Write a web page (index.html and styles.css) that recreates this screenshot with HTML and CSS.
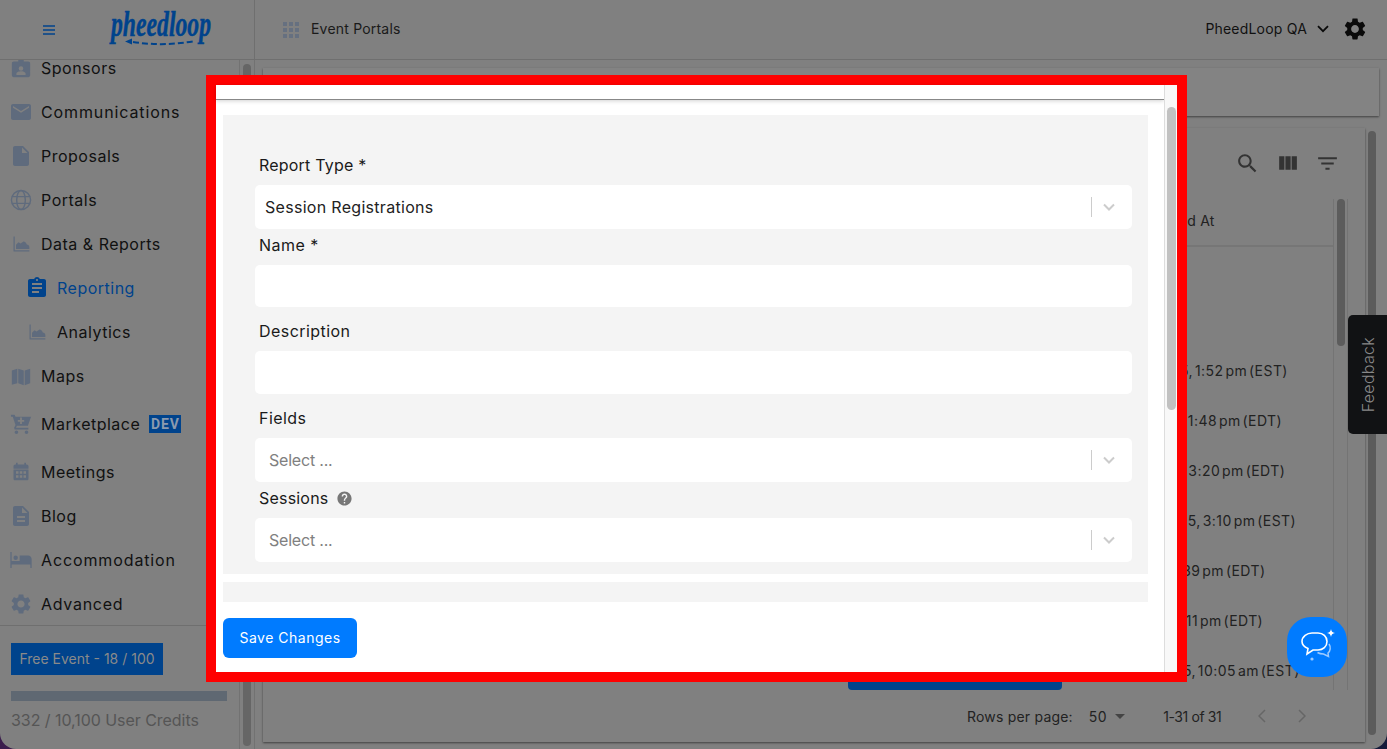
FILE: index.html
```html
<!DOCTYPE html>
<html lang="en">
<head>
<meta charset="utf-8">
<title>Event Portals</title>
<link rel="stylesheet" href="styles.css">
</head>
<body>
<div class="app">
  <header class="topbar">
    <div class="brand">
      <svg class="burger" viewBox="0 0 12 10"><path d="M0 1h12M0 5h12M0 9h12"/></svg>
      <svg class="logo" viewBox="0 0 100 36">
        <text x="0" y="24" textLength="100" lengthAdjust="spacingAndGlyphs">pheedloop</text>
        <path class="logo-dash" d="M22 30C42 33 62 33 84 29"/>
        <path class="logo-head" d="M14 29.500l7-3v6z"/>
      </svg>
    </div>
    <div class="crumb">
      <svg class="grid-ico" viewBox="0 0 16 16"><path d="M0 0h4v4H0zM6 0h4v4H6zM12 0h4v4h-4zM0 6h4v4H0zM6 6h4v4H6zM12 6h4v4h-4zM0 12h4v4H0zM6 12h4v4H6zM12 12h4v4h-4z"/></svg>
      <span class="bar-text">Event Portals</span>
    </div>
    <div class="account">
      <span class="bar-text">PheedLoop QA</span>
      <svg class="acc-chev" viewBox="0 0 12 8"><path d="M1 1.200l5 5 5-5"/></svg>
      <svg class="acc-gear" viewBox="0 0 24 24"><path d="M19.140 12.940c.04-.3.06-.61.06-.94 0-.32-.02-.64-.07-.94l2.030-1.580c.18-.14.23-.41.12-.61l-1.920-3.320c-.12-.22-.37-.29-.59-.22l-2.390.96c-.5-.38-1.030-.7-1.620-.94l-.36-2.540c-.04-.24-.24-.41-.48-.41h-3.840c-.24 0-.43.17-.47.41l-.36 2.540c-.59.24-1.130.57-1.620.94l-2.390-.96c-.22-.08-.47 0-.59.22L2.740 8.870c-.12.21-.08.47.12.61l2.030 1.580c-.05.3-.09.63-.09.94s.02.64.07.94l-2.030 1.580c-.18.14-.23.41-.12.61l1.920 3.320c.12.22.37.29.59.22l2.390-.96c.5.38 1.030.7 1.620.94l.36 2.540c.05.24.24.41.48.41h3.840c.24 0 .44-.17.47-.41l.36-2.540c.59-.24 1.130-.56 1.620-.94l2.390.96c.22.08.47 0 .59-.22l1.920-3.320c.12-.22.07-.47-.12-.61l-2.010-1.580zM12 15.600c-1.980 0-3.600-1.620-3.600-3.600s1.620-3.600 3.600-3.600 3.600 1.620 3.600 3.600-1.620 3.600-3.600 3.600z"/></svg>
    </div>
  </header>

  <div class="workspace">
    <aside class="sidebar">
      <div class="side-main">
        <nav class="nav">
          <ul class="nav-list">
            <li class="nav-item"><svg class="nav-ico ico-22" viewBox="0 0 24 24"><path fill-rule="evenodd" d="M4 5h5V3h2V1h2v2h2v2h5c1.100 0 2 .9 2 2v13c0 1.100-.9 2-2 2H4c-1.100 0-2-.9-2-2V7c0-1.100.9-2 2-2zm8 5a2.500 2.500 0 100 5 2.500 2.500 0 000-5zm-5 9.500h10V18c0-1.700-3.300-2.500-5-2.500S7 16.300 7 18z"/></svg>Sponsors</li>
            <li class="nav-item nav-wide"><svg class="nav-ico ico-mail" viewBox="0 0 20 16"><path fill-rule="evenodd" d="M2 0h16c1.100 0 2 .9 2 2v12c0 1.100-.9 2-2 2H2c-1.100 0-2-.9-2-2V2C0 .9.9 0 2 0zm16 2l-8 5-8-5v1.800l8 5 8-5z"/></svg>Communications</li>
            <li class="nav-item"><svg class="nav-ico ico-24" viewBox="0 0 24 24"><path d="M6 2c-1.100 0-1.990.9-1.990 2L4 20c0 1.100.89 2 1.990 2H18c1.100 0 2-.9 2-2V8l-6-6H6zm7 7V3.500L18.500 9H13z"/></svg>Proposals</li>
            <li class="nav-item"><svg class="nav-ico ico-23 nav-ico-line" viewBox="0 0 24 24"><circle cx="12" cy="12" r="10"/><ellipse cx="12" cy="12" rx="4.500" ry="10"/><path d="M2.500 8.500h19M2.500 15.500h19"/></svg>Portals</li>
            <li class="nav-item"><svg class="nav-ico" viewBox="0 0 24 24"><path d="M3 3h1.500v16.500H22V21H3zM6 18v-5l3-3 2.500 1.500L15 9c2 0 3.500 2 4 3.500 1.500 0 3 1.500 3 3V18z"/></svg>Data &amp; Reports</li>
            <li class="nav-item nav-sub nav-active"><svg class="nav-ico ico-24" viewBox="0 0 24 24"><path d="M19 3h-4.180C14.400 1.840 13.300 1 12 1c-1.300 0-2.400.84-2.820 2H5c-1.100 0-2 .9-2 2v14c0 1.100.9 2 2 2h14c1.100 0 2-.9 2-2V5c0-1.100-.9-2-2-2zm-7 0c.55 0 1 .45 1 1s-.45 1-1 1-1-.45-1-1 .45-1 1-1zm2 14H7v-2h7v2zm3-4H7v-2h10v2zm0-4H7V7h10v2z"/></svg>Reporting</li>
            <li class="nav-item nav-sub"><svg class="nav-ico" viewBox="0 0 24 24"><path d="M3 3h1.500v16.500H22V21H3zM6 18v-5l3-3 2.500 1.500L15 9c2 0 3.500 2 4 3.500 1.500 0 3 1.500 3 3V18z"/></svg>Analytics</li>
            <li class="nav-item"><svg class="nav-ico ico-22" viewBox="0 0 24 24"><path d="M2 6l6-2v16l-6 1.500zM9 4l6 2v16l-6-2zM16 6l6-2v16l-6 2z"/></svg>Maps</li>
            <li class="nav-item nav-tall"><svg class="nav-ico ico-22" viewBox="0 0 24 24"><path fill-rule="evenodd" d="M1 2h4l1 2h17l-3.500 10H7.500l-1 2H20v2H5l-.5-2 1.500-3L3 4H1zm10 3v2.500H8.500v2H11V12h2V9.500h2.500v-2H13V5zM7 19a2 2 0 110 4 2 2 0 010-4zm11 0a2 2 0 110 4 2 2 0 010-4z"/></svg>Marketplace<span class="dev">DEV</span></li>
            <li class="nav-item nav-tall"><svg class="nav-ico" viewBox="0 0 24 24"><path fill-rule="evenodd" d="M6 1h2v2h8V1h2v2h1c1.100 0 2 .9 2 2v15c0 1.100-.9 2-2 2H5c-1.100 0-2-.9-2-2V5c0-1.100.9-2 2-2h1zM3 8h18v1H3zM6 11v3h3v-3zm4.500 0v3h3v-3zM15 11v3h3v-3zM6 16v3h3v-3zm4.500 0v3h3v-3zM15 16v3h3v-3z"/></svg>Meetings</li>
            <li class="nav-item"><svg class="nav-ico ico-24" viewBox="0 0 24 24"><path d="M14 2H6c-1.100 0-1.990.9-1.990 2L4 20c0 1.100.89 2 1.990 2H18c1.100 0 2-.9 2-2V8l-6-6zm2 16H8v-2h8v2zm0-4H8v-2h8v2zm-3-5V3.500L18.500 9H13z"/></svg>Blog</li>
            <li class="nav-item nav-wide"><svg class="nav-ico ico-bed" viewBox="0 0 24 18"><path fill-rule="evenodd" d="M0 0h1.500v10h9V4H20c2.200 0 4 1.800 4 4v10h-1.500v-4h-21v4H0zM6 4a2.500 2.500 0 110 5 2.500 2.500 0 010-5z"/></svg>Accommodation</li>
            <li class="nav-item nav-mid"><svg class="nav-ico ico-24" viewBox="0 0 24 24"><path d="M19.140 12.940c.04-.3.06-.61.06-.94 0-.32-.02-.64-.07-.94l2.030-1.580c.18-.14.23-.41.12-.61l-1.920-3.320c-.12-.22-.37-.29-.59-.22l-2.390.96c-.5-.38-1.030-.7-1.620-.94l-.36-2.540c-.04-.24-.24-.41-.48-.41h-3.840c-.24 0-.43.17-.47.41l-.36 2.540c-.59.24-1.130.57-1.620.94l-2.390-.96c-.22-.08-.47 0-.59.22L2.740 8.870c-.12.21-.08.47.12.61l2.030 1.580c-.05.3-.09.63-.09.94s.02.64.07.94l-2.030 1.580c-.18.14-.23.41-.12.61l1.920 3.320c.12.22.37.29.59.22l2.390-.96c.5.38 1.030.7 1.620.94l.36 2.540c.05.24.24.41.48.41h3.840c.24 0 .44-.17.47-.41l.36-2.540c.59-.24 1.130-.56 1.620-.94l2.390.96c.22.08.47 0 .59-.22l1.920-3.320c.12-.22.07-.47-.12-.61l-2.010-1.580zM12 15.600c-1.980 0-3.600-1.620-3.600-3.600s1.620-3.600 3.600-3.600 3.600 1.620 3.600 3.600-1.620 3.600-3.600 3.600z"/></svg>Advanced</li>
          </ul>
        </nav>
        <div class="side-foot">
          <div class="plan">Free Event - 18 / 100</div>
          <div class="credit-bar"></div>
          <div class="credits">332 / 10,100 User Credits</div>
        </div>
      </div>
      <div class="side-scroll"><div class="side-thumb"></div></div>
    </aside>

    <main class="content">
      <div class="top-card"></div>
      <div class="lower">
        <section class="table-card">
          <div class="tools">
            <svg class="tool" viewBox="0 0 24 24"><path d="M15.500 14h-.79l-.28-.27C15.410 12.590 16 11.110 16 9.500 16 5.910 13.090 3 9.500 3S3 5.910 3 9.500 5.910 16 9.500 16c1.610 0 3.090-.59 4.230-1.570l.27.28v.79l5 4.990L20.490 19l-4.990-5zm-6 0C7.010 14 5 11.990 5 9.500S7.010 5 9.500 5 14 7.010 14 9.500 11.990 14 9.500 14z"/></svg>
            <svg class="tool" viewBox="0 0 24 24"><path d="M10 18h5V5h-5v13zm-6 0h5V5H4v13zM16 5v13h5V5h-5z"/></svg>
            <svg class="tool" viewBox="0 0 24 24"><path d="M10 18h4v-2h-4v2zM3 6v2h18V6H3zm3 7h12v-2H6v2z"/></svg>
          </div>
          <div class="table-wrap">
            <div class="table">
              <div class="thead"><span class="col col-head">Created At</span></div>
              <div class="trow trow-first"></div>
              <div class="trow"></div>
              <div class="trow"><span class="col d1">Nov 5, 2025, 1:52 pm (EST)</span></div>
              <div class="trow"><span class="col d2">Oct 6, 2025, 1:48 pm (EDT)</span></div>
              <div class="trow"><span class="col d3">Sep 9, 2025, 3:20 pm (EDT)</span></div>
              <div class="trow"><span class="col d4">Mar 12, 2025, 3:10 pm (EST)</span></div>
              <div class="trow"><span class="col d5">Sep 4, 2025, 1:39 pm (EDT)</span></div>
              <div class="trow"><span class="col d6">Aug 8, 2025, 1:11 pm (EDT)</span></div>
              <div class="trow"><span class="col d7">Feb 25, 2025, 10:05 am (EST)</span></div>
              <div class="create-btn"></div>
            </div>
            <div class="table-scroll"><div class="table-thumb"></div></div>
          </div>
          <div class="pager">
            <span class="pg-label">Rows per page:</span>
            <span class="pg-size">50</span>
            <svg class="pg-caret" viewBox="0 0 10 5"><path d="M0 0h10L5 5z"/></svg>
            <span class="pg-range">1-31 of 31</span>
            <svg class="pg-arrow" viewBox="0 0 8 14"><path d="M7 1L1 7l6 6"/></svg>
            <svg class="pg-arrow pg-next" viewBox="0 0 8 14"><path d="M1 1l6 6-6 6"/></svg>
          </div>
        </section>
        <div class="page-scroll"><div class="page-thumb"></div></div>
      </div>
    </main>
  </div>

  <div class="modal">
    <div class="modal-main">
      <div class="modal-top"></div>
      <div class="modal-body">
        <div class="panel">
          <div class="label label-tight">Report Type *</div>
          <div class="select"><span class="value">Session Registrations</span><span class="sep"></span><svg class="chev" viewBox="0 0 12 8"><path d="M1 1.500l5 5 5-5"/></svg></div>
          <div class="label">Name *</div>
          <div class="input"></div>
          <div class="label">Description</div>
          <div class="input input-tall"></div>
          <div class="label">Fields</div>
          <div class="select"><span class="placeholder">Select ...</span><span class="sep"></span><svg class="chev" viewBox="0 0 12 8"><path d="M1 1.500l5 5 5-5"/></svg></div>
          <div class="label label-tight">Sessions<svg class="help" viewBox="0 0 24 24"><path d="M12 2C6.480 2 2 6.480 2 12s4.480 10 10 10 10-4.480 10-10S17.520 2 12 2zm1 17h-2v-2h2v2zm2.070-7.750l-.9.92C13.450 12.900 13 13.500 13 15h-2v-.5c0-1.100.45-2.100 1.170-2.830l1.240-1.260c.37-.36.59-.86.59-1.410 0-1.100-.9-2-2-2s-2 .9-2 2H8c0-2.210 1.790-4 4-4s4 1.790 4 4c0 .88-.36 1.680-.93 2.250z"/></svg></div>
          <div class="select"><span class="placeholder">Select ...</span><span class="sep"></span><svg class="chev" viewBox="0 0 12 8"><path d="M1 1.500l5 5 5-5"/></svg></div>
        </div>
        <div class="panel panel-next"></div>
      </div>
      <div class="modal-foot"><button class="save" type="button">Save Changes</button></div>
    </div>
    <div class="modal-scroll"><div class="modal-thumb"></div></div>
  </div>

  <div class="feedback"><span>Feedback</span></div>
  <div class="chat">
    <svg viewBox="0 0 36 36"><path class="chat-main" d="M13 4h6c5 0 9 3.500 9 8.500S24 21 19 21h-5l-6 4 1-5.500C5.500 18 3 15.500 3 12.500 3 7.500 8 4 13 4z"/><path class="chat-soft" d="M30 15c2 3 1.500 7-1 9l.5 3.500-5-2.500c-2 0-4-.3-6-1.500"/><path class="chat-star" d="M32 0c.4 2.500 1.300 3.500 4 4-2.700.5-3.600 1.500-4 4-.4-2.500-1.300-3.500-4-4 2.700-.5 3.600-1.500 4-4z"/><circle class="chat-dot" cx="13" cy="30" r="1.600"/></svg>
  </div>
</div>
</body>
</html>
```

FILE: styles.css
```css
* { box-sizing: border-box; }
html, body { margin: 0; height: 100%; }
body {
  background: linear-gradient(90deg, #3b1d4d, #141a3a);
  font-family: "Inter", "Liberation Sans", sans-serif;
  font-size: 16px;
  letter-spacing: .5px;
  color: #111;
  overflow: hidden;
}
.app {
  position: relative;
  width: 1387px;
  height: 749px;
  background: #808080;
  border-radius: 0 0 16px 16px;
  overflow: hidden;
  display: flex;
  flex-direction: column;
}

/* top bar */
.topbar {
  position: relative;
  z-index: 1;
  height: 60px;
  flex: none;
  display: flex;
  align-items: center;
  background: #808080;
  border-bottom: 1px solid #6f6f6f;
}
.brand {
  width: 255px;
  height: 100%;
  flex: none;
  display: flex;
  align-items: center;
  padding-left: 43px;
  border-right: 1px solid #6f6f6f;
}
.burger { width: 12px; height: 10px; fill: none; stroke: #00438c; stroke-width: 1.500; }
.logo { width: 100px; height: 36px; margin-left: 56px; overflow: visible; }
.logo text { font-family: "Liberation Serif", serif; font-style: italic; font-weight: 700; font-size: 36px; letter-spacing: 0; fill: #00438c; stroke: #00438c; stroke-width: .5; }
.logo-dash { fill: none; stroke: #00438c; stroke-width: 2; stroke-dasharray: 6 3; }
.logo-head { fill: #00438c; }
.bar-text { padding-bottom: 2px; }
.crumb {
  display: flex;
  align-items: center;
  gap: 12px;
  padding-left: 28px;
  font-size: 14px;
  letter-spacing: .2px;
  color: #1a1a1a;
}
.grid-ico { width: 16px; height: 16px; fill: #667080; }
.account {
  margin-left: auto;
  display: flex;
  align-items: center;
  padding: 0 19px 1px 0;
  font-size: 14px;
  letter-spacing: .2px;
  color: #111;
}
.acc-chev { width: 12px; height: 8px; margin-left: 10px; fill: none; stroke: #0a0a0a; stroke-width: 1.800; }
.acc-gear { width: 26px; height: 26px; margin-left: 13px; fill: #0a0a0a; }

/* sidebar */
.workspace { flex: 1; display: flex; min-height: 0; }
.sidebar {
  width: 255px;
  flex: none;
  display: flex;
  border-right: 1px solid #727272;
}
.side-main {
  width: 240px;
  flex: none;
  display: flex;
  flex-direction: column;
  border-right: 1px solid #727272;
}
.nav { height: 566px; flex: none; border-bottom: 1px solid #6f6f6f; }
.nav-list { list-style: none; margin: -14px 0 0; padding: 0; }
.nav-item {
  height: 44px;
  display: flex;
  align-items: center;
  padding-left: 41px;
  position: relative;
  line-height: 16px;
}
.nav-tall { height: 48px; padding-top: 4px; }
.nav-wide { letter-spacing: .88px; }
.nav-mid { letter-spacing: .72px; }
.nav-sub { padding-left: 57px; }
.nav-active { color: #00438c; }
.nav-ico {
  position: absolute;
  left: 21px;
  top: 50%;
  width: 20px;
  height: 20px;
  transform: translate(-50%, -50%);
  fill: #5f6b7d;
}
.ico-22 { width: 22px; height: 22px; }
.ico-23 { width: 23px; height: 23px; }
.ico-24 { width: 24px; height: 24px; }
.ico-mail { width: 20px; height: 16px; }
.ico-bed { width: 22px; height: 16px; }
.nav-tall .nav-ico { margin-top: 2px; }
.nav-ico-line { fill: none; stroke: #5f6b7d; stroke-width: 1.500; }
.nav-sub .nav-ico { left: 37px; }
.nav-active .nav-ico { fill: #00438c; }
.dev {
  margin-left: 9px;
  width: 32px;
  height: 18px;
  background: #00438c;
  color: #8b9aae;
  font-family: "Liberation Sans Narrow", "Roboto", sans-serif;
  font-size: 14px;
  font-weight: 700;
  letter-spacing: .8px;
  text-align: center;
  line-height: 18px;
}
.side-foot { padding: 17px 12px 0 11px; }
.plan {
  width: 152px;
  height: 32px;
  background: #00438c;
  color: #8a8a8a;
  font-size: 14px;
  line-height: 32px;
  text-align: center;
  letter-spacing: 0;
}
.credit-bar { height: 10px; margin-top: 16px; background: #5f6872; }
.credits { margin-top: 9px; color: #555; font-size: 16px; letter-spacing: -.05px; line-height: 20px; white-space: nowrap; }
.side-scroll { flex: 1; padding: 4px 3px 3px 3px; }
.side-thumb { height: 100%; background: #666; border-radius: 4px; }

/* main */
.content {
  flex: 1;
  min-width: 0;
  padding: 8px 8px 0 8px;
  display: flex;
  flex-direction: column;
}
.top-card {
  height: 48px;
  flex: none;
  background: #838383;
  box-shadow: 0 1px 2px rgba(0, 0, 0, .5);
}
.lower { flex: 1; display: flex; margin-top: 12px; min-height: 0; }
.table-card {
  width: 1102px;
  height: 614px;
  flex: none;
  display: flex;
  flex-direction: column;
  background: #808080;
  box-shadow: 0 1px 2px rgba(0, 0, 0, .5);
}
.tools {
  height: 71px;
  flex: none;
  display: flex;
  justify-content: flex-end;
  gap: 15px;
  padding: 23px 25px 0 0;
}
.tool { width: 25px; height: 25px; fill: #333; }
.table-wrap { height: 491px; flex: none; display: flex; padding-right: 17px; }
.table { flex: 1; position: relative; overflow: hidden; }
.thead {
  height: 48px;
  display: flex;
  align-items: center;
  padding-bottom: 4px;
  border-bottom: 2px solid #767676;
  font-size: 14px;
  letter-spacing: .2px;
  color: #222;
}
.trow { height: 50px; display: flex; align-items: center; font-size: 14px; letter-spacing: .45px; word-spacing: -2.500px; color: #222; }
.trow-first { height: 48px; }
.col { white-space: nowrap; }
.col-head { margin-left: 879px; }
.d1 { margin-left: 845px; }
.d2 { margin-left: 841px; }
.d3 { margin-left: 839px; }
.d4 { margin-left: 847px; }
.d5 { margin-left: 822px; }
.d6 { margin-left: 825px; }
.d7 { margin-left: 841px; }
.create-btn {
  position: absolute;
  left: 585px;
  bottom: 0;
  width: 214px;
  height: 12px;
  background: #00438c;
  border-radius: 0 0 4px 4px;
}
.table-scroll {
  width: 15px;
  flex: none;
  padding: 0 3px;
  border-left: 1px solid #747474;
  border-right: 1px solid #747474;
}
.table-thumb { width: 8px; height: 147px; background: #5c5c5c; border-radius: 4px; }
.pager {
  flex: 1;
  display: flex;
  align-items: center;
  padding: 0 0 0 704px;
  font-size: 14px;
  letter-spacing: .2px;
  color: #222;
}
.pg-size { margin-left: 16px; letter-spacing: .5px; }
.pg-caret { width: 10px; height: 5px; margin-left: 8px; fill: #444; }
.pg-range { margin-left: 38px; letter-spacing: -.4px; }
.pg-arrow { width: 8px; height: 14px; margin-left: 37px; fill: none; stroke: #666; stroke-width: 1.500; }
.pg-next { margin-left: 32px; }
.page-scroll { flex: 1; padding: 3px; }
.page-thumb { width: 8px; height: 604px; background: #5c5c5c; border-radius: 4px; }

/* modal */
.modal {
  position: absolute;
  z-index: 2;
  left: 206px;
  top: 75px;
  width: 981px;
  height: 607px;
  border: 10px solid #f00;
  background: #fff;
  display: flex;
}
.modal-main { width: 948px; flex: none; display: flex; flex-direction: column; }
.modal-top { height: 15px; flex: none; border-bottom: 1px solid #888; box-shadow: 0 1px 4px rgba(0, 0, 0, .18); }
.modal-body { flex: 1; min-height: 0; overflow: hidden; padding: 15px 16px 0 7px; }
.panel {
  background: #f4f4f4;
  padding: 40px 16px 12px 32px;
}
.panel-next { height: 20px; margin-top: 8px; padding: 0; }
.label {
  height: 20px;
  line-height: 20px;
  padding-left: 4px;
  margin-bottom: 10px;
  letter-spacing: .45px;
  color: #1a1a1a;
  display: flex;
  align-items: center;
}
.label-tight { letter-spacing: .2px; }
.help { width: 17px; height: 17px; margin-left: 8px; fill: #777; }
.select {
  height: 44px;
  background: #fff;
  border-radius: 5px;
  margin-bottom: 6px;
  display: flex;
  align-items: center;
  padding-left: 10px;
}
.panel .select:last-child { margin-bottom: 0; }
.value { color: #222; letter-spacing: .3px; }
.placeholder { color: #808080; padding-left: 4px; letter-spacing: -.2px; }
.sep { margin-left: auto; width: 1px; height: 20px; background: #ccc; }
.chev { width: 12px; height: 8px; margin: 0 17px 0 11px; fill: none; stroke: #ccc; stroke-width: 2; }
.input { height: 42px; background: #fff; border-radius: 5px; margin-bottom: 14px; }
.input-tall { height: 43px; }
.modal-foot { height: 70px; flex: none; padding: 16px 7px 0; }
.save {
  width: 134px;
  height: 40px;
  border: 0;
  border-radius: 6px;
  padding: 0 0 2px;
  background: #007bff;
  color: #fff;
  font: inherit;
  font-size: 14px;
  letter-spacing: inherit;
}
.modal-scroll { flex: 1; background: #f8f8f8; border-left: 1px solid #ddd; padding: 22px 1px 0 2px; }
.modal-thumb { height: 303px; background: #c1c1c1; border-radius: 5px; }

/* floating */
.feedback {
  position: absolute;
  z-index: 2;
  right: 0;
  top: 315px;
  width: 39px;
  height: 119px;
  background: #111214;
  border-radius: 5px 0 0 5px;
  display: flex;
  align-items: center;
  justify-content: center;
}
.feedback span { writing-mode: vertical-rl; transform: rotate(180deg); color: #888; font-size: 16px; font-weight: 300; letter-spacing: .3px; }
.chat {
  position: absolute;
  z-index: 2;
  left: 1287px;
  top: 617px;
  width: 60px;
  height: 60px;
  background: #007bff;
  border-radius: 24px;
  display: flex;
  align-items: center;
  justify-content: center;
}
.chat svg { width: 36px; height: 36px; }
.chat-main { fill: none; stroke: #fff; stroke-width: 1.600; }
.chat-soft { fill: none; stroke: #9ccaff; stroke-width: 1.500; }
.chat-star { fill: #fff; }
.chat-dot { fill: #9ccaff; }
```
